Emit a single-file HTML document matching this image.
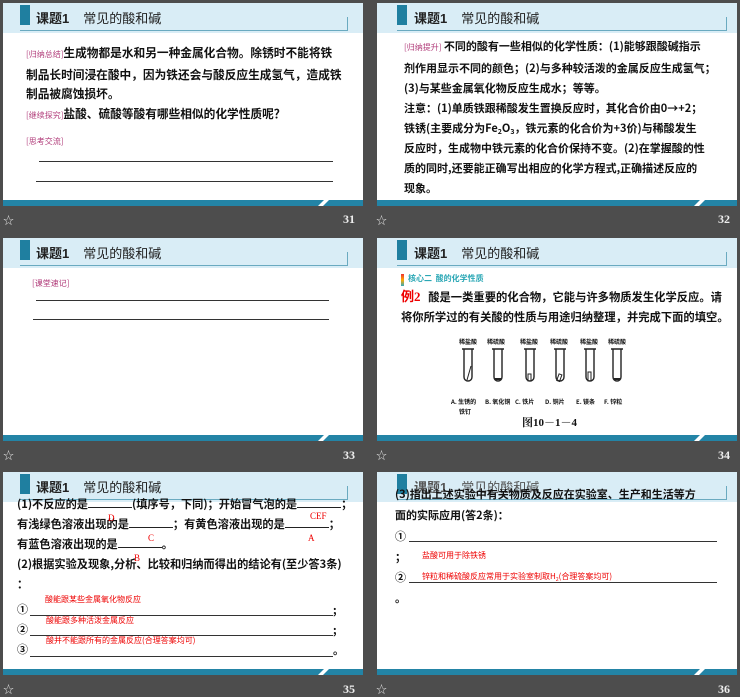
<!DOCTYPE html>
<html><head><meta charset="utf-8"><style>
*{margin:0;padding:0;box-sizing:border-box}
body{width:740px;height:696px;background:#4d4d4d;position:relative;overflow:hidden;font-family:"Liberation Serif","Noto Serif CJK SC","Noto Sans CJK SC",serif}
.s{position:absolute;width:360px;height:203px;background:#fff;overflow:hidden}
.hd{position:absolute;left:0;top:0;width:360px;height:30px;background:#d9edf6}
.blk{position:absolute;left:17px;top:2px;width:10px;height:20px;background:#1f7fa0}
.ul{position:absolute;left:17px;top:27px;width:328px;height:1px;background:#6aaac0}
.tk{position:absolute;left:344px;top:14px;width:1px;height:14px;background:#6aaac0}
.tt{position:absolute;left:33px;top:5px;font:13px "Liberation Sans","Noto Sans CJK SC",sans-serif;color:#222;white-space:nowrap}
.tt b{margin-right:14px}
.bb{position:absolute;left:0;top:197px;width:360px;height:6px;background:#2384a6}
.bb i{position:absolute;left:318px;top:0;width:5px;height:6px;background:#fff;transform:skewX(-45deg)}
.t{position:absolute;font-weight:bold;color:#111;font-size:11.5px;white-space:nowrap;font-family:"Noto Sans CJK SC",sans-serif}
.lb{color:#b03a78;font-size:8px;font-weight:normal}
.ln{position:absolute;height:1px;background:#333}
.u{display:inline-block;border-bottom:1px solid #222;height:11px;vertical-align:baseline}
.r{position:absolute;color:#e00;font-size:8px;white-space:nowrap;font-family:"Noto Sans CJK SC",sans-serif}
.ra{position:absolute;color:#e00;font-size:9px;font-family:"Liberation Serif",serif}
.st{position:absolute;color:#ddd;font-size:11px}
.pn{position:absolute;color:#eee;font:bold 12px "Liberation Serif",serif}
sub{font-size:7px;line-height:0;vertical-align:-2px}
</style></head><body>

<!-- slide 31 -->
<div class="s" style="left:3px;top:3px">
<div class="hd"></div><div class="blk"></div><div class="ul"></div><div class="tk"></div>
<div class="tt"><b>课题1</b>常见的酸和碱</div>
<div class="t" style="left:23px;top:40px;line-height:19.5px;font-size:11.7px"><span class="lb">[归纳总结]</span>生成物都是水和另一种金属化合物。除锈时不能将铁<br>制品长时间浸在酸中，因为铁还会与酸反应生成氢气，造成铁<br>制品被腐蚀损坏。</div>
<div class="t" style="left:23px;top:102px;font-size:11.7px"><span class="lb">[继续探究]</span>盐酸、硫酸等酸有哪些相似的化学性质呢？</div>
<div class="t" style="left:23px;top:129px"><span class="lb">[思考交流]</span></div>
<div class="ln" style="left:36px;top:158px;width:294px"></div>
<div class="ln" style="left:33px;top:178px;width:297px"></div>
<div class="bb"><i></i></div>
</div>
<div class="st" style="left:3px;top:212px">☆</div><div class="pn" style="left:343px;top:212px">31</div>

<!-- slide 32 -->
<div class="s" style="left:377px;top:3px">
<div class="hd"></div><div class="blk" style="left:20px"></div><div class="ul" style="left:20px;width:330px"></div><div class="tk" style="left:349px"></div>
<div class="tt" style="left:37px"><b>课题1</b>常见的酸和碱</div>
<div class="t" style="left:27px;top:33px;line-height:20px;font-size:11px"><span class="lb">[归纳提升]</span> 不同的酸有一些相似的化学性质：(1)能够跟酸碱指示<br>剂作用显示不同的颜色；(2)与多种较活泼的金属反应生成氢气；<br>(3)与某些金属氧化物反应生成水；等等。<br>注意：(1)单质铁跟稀酸发生置换反应时，其化合价由0→+2；<br>铁锈(主要成分为Fe<sub>2</sub>O<sub>3</sub>，铁元素的化合价为+3价)与稀酸发生<br>反应时，生成物中铁元素的化合价保持不变。(2)在掌握酸的性<br>质的同时,还要能正确写出相应的化学方程式,正确描述反应的<br>现象。</div>
<div class="bb"><i style="left:320px"></i></div>
</div>
<div class="st" style="left:376px;top:212px">☆</div><div class="pn" style="left:718px;top:212px">32</div>

<!-- slide 33 -->
<div class="s" style="left:3px;top:238px">
<div class="hd"></div><div class="blk"></div><div class="ul"></div><div class="tk"></div>
<div class="tt"><b>课题1</b>常见的酸和碱</div>
<div class="t" style="left:29px;top:36px"><span class="lb">[课堂速记]</span></div>
<div class="ln" style="left:33px;top:62px;width:293px"></div>
<div class="ln" style="left:30px;top:81px;width:296px"></div>
<div class="bb"><i></i></div>
</div>
<div class="st" style="left:3px;top:447px">☆</div><div class="pn" style="left:343px;top:448px">33</div>

<!-- slide 34 -->
<div class="s" style="left:377px;top:238px">
<div class="hd"></div><div class="blk" style="left:20px"></div><div class="ul" style="left:20px;width:330px"></div><div class="tk" style="left:349px"></div>
<div class="tt" style="left:37px"><b>课题1</b>常见的酸和碱</div>
<div style="position:absolute;left:24px;top:36px;width:3px;height:12px;background:linear-gradient(#e33,#fa0,#3ab)"></div>
<div class="t" style="left:31px;top:35px;font-size:8px;color:#2aa7b5">核心二&nbsp; 酸的化学性质</div>
<div class="t" style="left:24px;top:49px;line-height:20px;font-size:11.3px"><span style="color:#e00;font-family:'Liberation Serif',serif;font-size:13px">例2</span>&nbsp;&nbsp; 酸是一类重要的化合物，它能与许多物质发生化学反应。请<br>将你所学过的有关酸的性质与用途归纳整理，并完成下面的填空。</div>
<svg style="position:absolute;left:74px;top:98px" width="206" height="86" viewBox="-6 0 206 86">
<g font-size="6" font-weight="bold" font-family="Noto Sans CJK SC" fill="#111">
<text x="2" y="8">稀盐酸</text><text x="30" y="8">稀硫酸</text><text x="63" y="8">稀盐酸</text><text x="93" y="8">稀硫酸</text><text x="123" y="8">稀盐酸</text><text x="151" y="8">稀硫酸</text>
<text x="-6" y="68">A. 生锈的</text><text x="2" y="78">铁钉</text><text x="28" y="68">B. 氧化铜</text><text x="58" y="68">C. 铁片</text><text x="88" y="68">D. 铜片</text><text x="119" y="68">E. 镁条</text><text x="147" y="68">F. 锌粒</text></g>
<g fill="none" stroke="#222" stroke-width="1.4">
<path d="M7 13v28a4 4 0 0 0 8 0V13M5 13h12"/><path d="M37 13v28a4 4 0 0 0 8 0V13M35 13h12"/><path d="M69 13v28a4 4 0 0 0 8 0V13M67 13h12"/><path d="M99 13v28a4 4 0 0 0 8 0V13M97 13h12"/><path d="M129 13v28a4 4 0 0 0 8 0V13M127 13h12"/><path d="M156 13v28a4 4 0 0 0 8 0V13M154 13h12"/>
<path d="M10 44l4-14" stroke-width="1"/><rect x="71" y="38" width="3" height="7" stroke-width="1"/><rect x="101" y="38" width="3" height="7" stroke-width="1" transform="rotate(20 102 41)"/><rect x="131" y="36" width="3" height="9" stroke-width="1"/></g>
<rect x="38" y="42" width="6" height="2" fill="#222"/><rect x="157" y="42" width="6" height="2" fill="#222"/>
</svg>
<div class="t" style="left:145px;top:176px;font-size:11px;font-family:'Liberation Serif','Noto Serif CJK SC',serif">图10－1－4</div>
<div class="bb"><i style="left:320px"></i></div>
</div>
<div class="st" style="left:376px;top:447px">☆</div><div class="pn" style="left:718px;top:448px">34</div>

<!-- slide 35 -->
<div class="s" style="left:3px;top:472px">
<div class="hd"></div><div class="blk"></div><div class="ul"></div><div class="tk"></div>
<div class="tt"><b>课题1</b>常见的酸和碱</div>
<div class="t" style="left:14px;top:22px;line-height:20px;font-size:11.2px">(1)不反应的是<span class="u" style="width:44px"></span>(填序号，下同)；开始冒气泡的是<span class="u" style="width:44px"></span>；<br>有浅绿色溶液出现的是<span class="u" style="width:44px"></span>；有黄色溶液出现的是<span class="u" style="width:44px"></span>；<br>有蓝色溶液出现的是<span class="u" style="width:44px"></span>。<br>(2)根据实验及现象,分析、比较和归纳而得出的结论有(至少答3条)<br>：</div>
<div class="ra" style="left:105px;top:41px">D</div><div class="ra" style="left:307px;top:39px">CEF</div>
<div class="ra" style="left:145px;top:61px">C</div><div class="ra" style="left:305px;top:61px">A</div>
<div class="ra" style="left:131px;top:81px">B</div>
<div class="r" style="left:42px;top:122px">酸能跟某些金属氧化物反应</div>
<div class="r" style="left:43px;top:143px">酸能跟多种活泼金属反应</div>
<div class="r" style="left:43px;top:163px">酸并不能跟所有的金属反应(合理答案均可)</div>
<div class="t" style="left:14px;top:129px;font-size:11px">①</div><div class="ln" style="left:27px;top:143px;width:303px"></div><div class="t" style="left:330px;top:130px;font-size:11px">;</div>
<div class="t" style="left:14px;top:149px;font-size:11px">②</div><div class="ln" style="left:27px;top:163px;width:303px"></div><div class="t" style="left:330px;top:150px;font-size:11px">;</div>
<div class="t" style="left:14px;top:169px;font-size:11px">③</div><div class="ln" style="left:27px;top:184px;width:303px"></div><div class="t" style="left:330px;top:170px;font-size:11px">。</div>
<div class="bb"><i></i></div>
</div>
<div class="st" style="left:3px;top:681px">☆</div><div class="pn" style="left:343px;top:682px">35</div>

<!-- slide 36 -->
<div class="s" style="left:377px;top:472px">
<div class="hd"></div><div class="blk" style="left:20px"></div><div class="ul" style="left:20px;width:330px"></div><div class="tk" style="left:349px"></div>
<div class="tt" style="left:37px;color:#555"><b>课题1</b>常见的酸和碱</div>
<div class="t" style="left:18px;top:12px;line-height:21px;font-size:11px">(3)指出上述实验中有关物质及反应在实验室、生产和生活等方<br>面的实际应用(答2条)：</div>
<div class="t" style="left:18px;top:56px;font-size:11px">①</div><div class="ln" style="left:32px;top:69px;width:308px"></div>
<div class="t" style="left:18px;top:77px;font-size:11px">；</div>
<div class="r" style="left:45px;top:78px">盐酸可用于除铁锈</div>
<div class="t" style="left:18px;top:97px;font-size:11px">②</div><div class="ln" style="left:32px;top:110px;width:308px"></div>
<div class="r" style="left:45px;top:99px">锌粒和稀硫酸反应常用于实验室制取H<sub style="font-size:5px">2</sub>(合理答案均可)</div>
<div class="t" style="left:18px;top:118px;font-size:11px">。</div>
<div class="bb"><i style="left:320px"></i></div>
</div>
<div class="st" style="left:376px;top:681px">☆</div><div class="pn" style="left:718px;top:682px">36</div>

</body></html>
